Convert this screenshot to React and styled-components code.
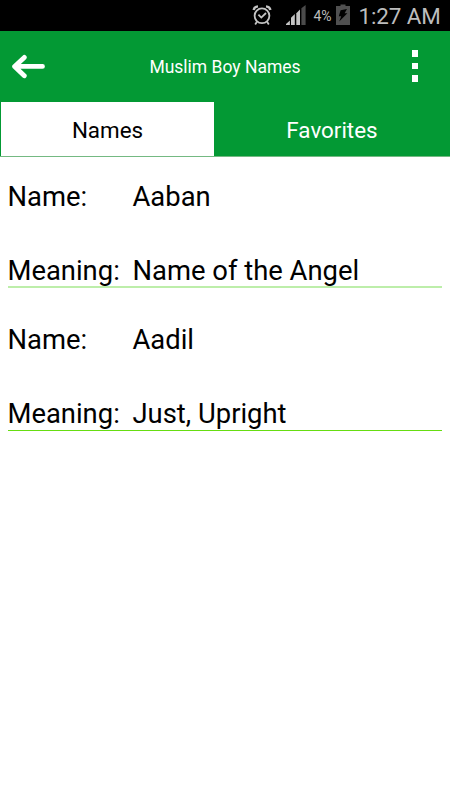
import styled, { createGlobalStyle } from "styled-components";

const names = [
  { name: "Aaban", meaning: "Name of the Angel", soft: true },
  { name: "Aadil", meaning: "Just, Upright" },
];

const App = () => {
  return (
    <Screen>
      <GlobalStyle />
      <StatusBar>
        <AlarmIcon />
        <SignalIcon />
        <Percent>4%</Percent>
        <BatteryIcon />
        <Clock>1:27 AM</Clock>
      </StatusBar>
      <Header>
        <HeaderButton aria-label="Back">
          <BackIcon />
        </HeaderButton>
        <Title>Muslim Boy Names</Title>
        <MenuButton aria-label="Menu">
          <Dot />
          <Dot />
          <Dot />
        </MenuButton>
      </Header>
      <Tabs>
        <Tab $active>Names</Tab>
        <Tab>Favorites</Tab>
      </Tabs>
      <List>
        {names.map((item) => (
          <Entry key={item.name} $soft={item.soft}>
            <Row>
              <Label>Name:</Label>
              <span>{item.name}</span>
            </Row>
            <Row>
              <Label>Meaning:</Label>
              <span>{item.meaning}</span>
            </Row>
          </Entry>
        ))}
      </List>
    </Screen>
  );
};

const AlarmIcon = () => (
  <AlarmSvg viewBox="0 0 20 22" fill="none" stroke="#c4c4c4">
    <circle cx="10" cy="11.8" r="7.4" strokeWidth="1.8" />
    <path d="M1.6 6 Q2.2 2.6 6 2.4M18.4 6Q17.8 2.6 14 2.4" strokeWidth="2.4" />
    <path d="M4.9 17.7 3.2 20.4M15.1 17.7 16.8 20.4" strokeWidth="1.8" />
    <path d="M6.4 10.7 9.3 13.6 14 9" strokeWidth="1.8" />
  </AlarmSvg>
);

const SignalIcon = () => (
  <SignalSvg viewBox="0 0 20 20">
    <path d="M0 20v-1l3.9-3.4V20z" fill="#c4c4c4" />
    <path d="M5 20v-7.2l3.8-3.7V20z" fill="#c4c4c4" />
    <path d="M10.3 20V8.2L14 4.6V20z" fill="#c4c4c4" />
    <path d="M15.4 20V3.3L19.6 0v20z" fill="#4b4b4b" />
  </SignalSvg>
);

const BatteryIcon = () => (
  <BatterySvg viewBox="0 0 14 21">
    <path d="M4.5 0.5h5V2H14v19H0V2h4.5z" fill="#505050" />
    <path d="M4.6 6.2 11 4.9 8.6 9.2h2.8L3.2 17.6l2-5.4H2.8z" fill="#000" />
  </BatterySvg>
);

const BackIcon = () => (
  <BackSvg
    viewBox="0 0 34 26"
    fill="none"
    stroke="#fff"
    strokeWidth="4.8"
    strokeLinecap="round"
    strokeLinejoin="round"
  >
    <path d="M12.3 3.4 2.6 12.6 12.3 21.8M3.5 12.4H30.5" />
  </BackSvg>
);

export default App;

const GlobalStyle = createGlobalStyle`
  * {
    box-sizing: border-box;
  }
  body {
    margin: 0;
    background-color: white;
    font-family: Roboto, "Liberation Sans", sans-serif;
  }
`;

const Screen = styled.div`
  display: flex;
  flex-direction: column;
  min-height: 800px;
  background-color: white;
`;

const StatusBar = styled.div`
  display: flex;
  align-items: flex-start;
  height: 31px;
  padding-left: 252px;
  background-color: black;
  color: #bdbdbd;
  white-space: nowrap;
`;

const AlarmSvg = styled.svg`
  width: 20px;
  height: 22px;
  margin-top: 4px;
`;

const SignalSvg = styled.svg`
  width: 20px;
  height: 20px;
  margin: 5px 0 0 14px;
`;

const Percent = styled.span`
  width: 19px;
  margin: 6px 0 0 7.5px;
  font-size: 14px;
  line-height: 20px;
`;

const BatterySvg = styled.svg`
  width: 14px;
  height: 21px;
  margin: 4px 0 0 3.5px;
`;

const Clock = styled.span`
  margin: 3px 0 0 8.5px;
  font-size: 22.4px;
  line-height: 27px;
  letter-spacing: -0.1px;
`;

const Header = styled.header`
  display: flex;
  align-items: center;
  justify-content: space-between;
  height: 70px;
  padding: 0 24px 0 12px;
  background-color: #039934;
`;

const HeaderButton = styled.button`
  display: flex;
  padding: 0;
  border: none;
  background: none;
`;

const BackSvg = styled.svg`
  width: 34px;
  height: 26px;
  margin-top: 1px;
`;

const Title = styled.h1`
  margin: 2px 0 0;
  color: white;
  font-size: 17.5px;
  font-weight: 400;
  line-height: 24px;
`;

const MenuButton = styled(HeaderButton)`
  flex-direction: column;
  align-items: center;
  gap: 6px;
  width: 22px;
`;

const Dot = styled.span`
  width: 6px;
  height: 6.5px;
  background-color: white;
`;

const Tabs = styled.nav`
  display: flex;
  height: 56px;
  padding: 1px 0 0 1px;
  border-bottom: 1px solid #74b982;
  background-color: #039934;
`;

const Tab = styled.div`
  flex: ${(props) => (props.$active ? "0 0 213px" : "1")};
  padding-top: 14px;
  background-color: ${(props) => (props.$active ? "white" : "#039934")};
  color: ${(props) => (props.$active ? "black" : "white")};
  font-size: 22.4px;
  line-height: 28px;
  text-align: center;
`;

const List = styled.main`
  display: flex;
  flex-direction: column;
  gap: 36px;
  padding: 24px 8px;
`;

const Entry = styled.section`
  display: flex;
  flex-direction: column;
  gap: 42px;
  height: 107px;
  border-bottom: ${(props) =>
    props.$soft ? "2px solid #bdeeaa" : "1px solid #66dd11"};
`;

const Row = styled.div`
  display: flex;
  margin-left: -0.5px;
  color: black;
  font-size: 27.4px;
  line-height: 32px;
  white-space: nowrap;
`;

const Label = styled.span`
  width: 125px;
`;
